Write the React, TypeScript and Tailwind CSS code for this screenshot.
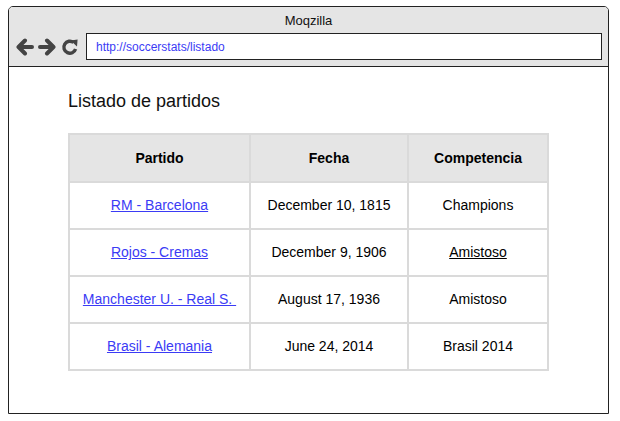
const rows = [
    { partido: 'RM - Barcelona', fecha: 'December 10, 1815', comp: 'Champions', compLink: false },
    { partido: 'Rojos - Cremas', fecha: 'December 9, 1906', comp: 'Amistoso', compLink: true },
    { partido: 'Manchester U. - Real S. ', fecha: 'August 17, 1936', comp: 'Amistoso', compLink: false },
    { partido: 'Brasil - Alemania', fecha: 'June 24, 2014', comp: 'Brasil 2014', compLink: false },
];

function ArrowIcon({ flip }: { flip?: boolean }) {
    return (
        <svg width="19" height="18" viewBox="0 0 19 18" className={flip ? '-scale-x-100' : ''}>
            <path d="M17 9H4M10 2.5L3.5 9 10 15.5" fill="none" stroke="#444" strokeWidth="4" strokeLinejoin="round" strokeLinecap="round" />
        </svg>
    );
}

function ReloadIcon() {
    return (
        <svg width="18" height="18" viewBox="0 0 18 18">
            <path d="M14.6 11A6 6 0 1 1 12.6 4.5" fill="none" stroke="#444" strokeWidth="3.4" />
            <path d="M9.6 2.4L16.6 1.4 16 8.6Z" fill="#444" />
        </svg>
    );
}

export default function App() {
    return (
        <div className="w-[620px] h-[421px] bg-white pt-[6px] pl-[8px] font-['Liberation_Sans',Arial,sans-serif] text-[14px] text-black">
            <div className="w-[601px] h-[408px] border border-[#222] rounded-t-[5px] flex flex-col overflow-hidden">
                {/* browser chrome */}
                <div className="h-[60px] bg-[#e5e5e5] border-b border-[#222] flex flex-col">
                    <div className="h-[26px] flex items-center justify-center text-[13px] text-[#111] pt-[1px]">
                        Moqzilla
                    </div>
                    <div className="flex items-center h-[27px]">
                        <div className="w-[77px] flex items-center gap-[4px] pl-[6px]">
                            <ArrowIcon />
                            <ArrowIcon flip />
                            <ReloadIcon />
                        </div>
                        <div className="w-[516px] h-[27px] bg-white border border-[#222] flex items-center pl-[9px] text-[12px] text-[#3b3bf5]">
                            http://soccerstats/listado
                        </div>
                    </div>
                </div>

                {/* page */}
                <div className="flex-1 bg-white pl-[59px] pt-[23px]">
                    <h1 className="text-[18px] text-[#111] leading-[22px]">Listado de partidos</h1>
                    <table className="mt-[21px] border-collapse border-2 border-[#dadada] text-center">
                        <thead>
                            <tr className="bg-[#e5e5e5] h-[48px]">
                                <th className="w-[181px] border-2 border-[#dadada] font-bold">Partido</th>
                                <th className="w-[158px] border-2 border-[#dadada] font-bold">Fecha</th>
                                <th className="w-[140px] border-2 border-[#dadada] font-bold">Competencia</th>
                            </tr>
                        </thead>
                        <tbody>
                            {rows.map((r, i) => (
                                <tr key={i} className="h-[47px]">
                                    <td className="border-2 border-[#dadada]">
                                        <a href="#" className="text-[#3b3bf5] underline whitespace-pre">{r.partido}</a>
                                    </td>
                                    <td className="border-2 border-[#dadada]">{r.fecha}</td>
                                    <td className="border-2 border-[#dadada]">
                                        {r.compLink ? <span className="underline">{r.comp}</span> : r.comp}
                                    </td>
                                </tr>
                            ))}
                        </tbody>
                    </table>
                </div>
            </div>
        </div>
    );
}
